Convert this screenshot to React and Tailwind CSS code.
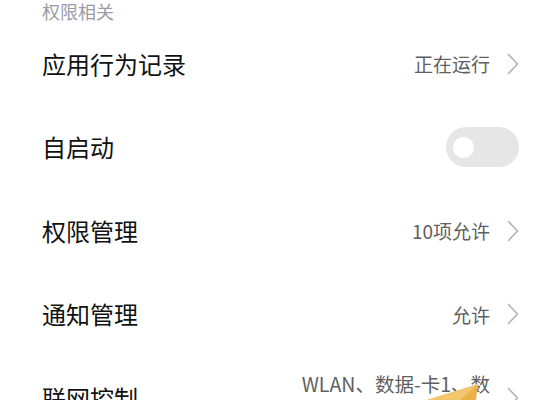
import React from "react";

const font = { fontFamily: '"Noto Sans CJK SC", "Noto Sans", sans-serif' };

function Chevron() {
  return (
    <svg width="12" height="22" viewBox="0 0 12 22" className="shrink-0 ml-[17px]">
      <path d="M1.5 1.5 L10.5 11 L1.5 20.5" fill="none" stroke="#b3b3b3" strokeWidth="1.6" strokeLinecap="round" strokeLinejoin="round" />
    </svg>
  );
}

function Row({ label, children }) {
  return (
    <div className="h-[83.5px] flex items-center justify-between">
      <div className="text-[24px] text-[#111] leading-none">{label}</div>
      <div className="flex items-center">{children}</div>
    </div>
  );
}

function Value({ text }) {
  return (
    <>
      <span className="text-[19px] text-[#5f5f5f] leading-none">{text}</span>
      <Chevron />
    </>
  );
}

export default function App() {
  return (
    <div className="relative w-[548px] h-[400px] overflow-hidden bg-white pl-[42px] pr-[29px]" style={font}>
      <div className="h-[22px] flex items-center text-[18px] text-[#9b9ca8] leading-none">权限相关</div>
      <Row label="应用行为记录"><Value text="正在运行" /></Row>
      <Row label="自启动">
        <div className="w-[73px] h-[40px] rounded-full bg-[#e6e6e6] flex items-center pl-[7px]">
          <div className="w-[21px] h-[21px] rounded-full bg-white" />
        </div>
      </Row>
      <Row label="权限管理"><Value text="10项允许" /></Row>
      <Row label="通知管理"><Value text="允许" /></Row>
      <div className="h-[83.5px] flex items-center justify-between">
        <div className="text-[24px] text-[#111] leading-none">联网控制</div>
        <div className="flex items-center">
          <div className="text-[19.5px] text-[#5f5f5f] leading-[28px] text-right">
            <div>WLAN、数据-卡1、数</div>
            <div>据-卡2</div>
          </div>
          <Chevron />
        </div>
      </div>
      <svg className="absolute left-[420px] top-[380px]" width="70" height="20" viewBox="0 0 70 20">
        <polygon points="6,20 58,4 50,20" fill="#f3c66e" />
        <polygon points="40,20 58,4 56,20" fill="#eab04a" />
      </svg>
    </div>
  );
}
